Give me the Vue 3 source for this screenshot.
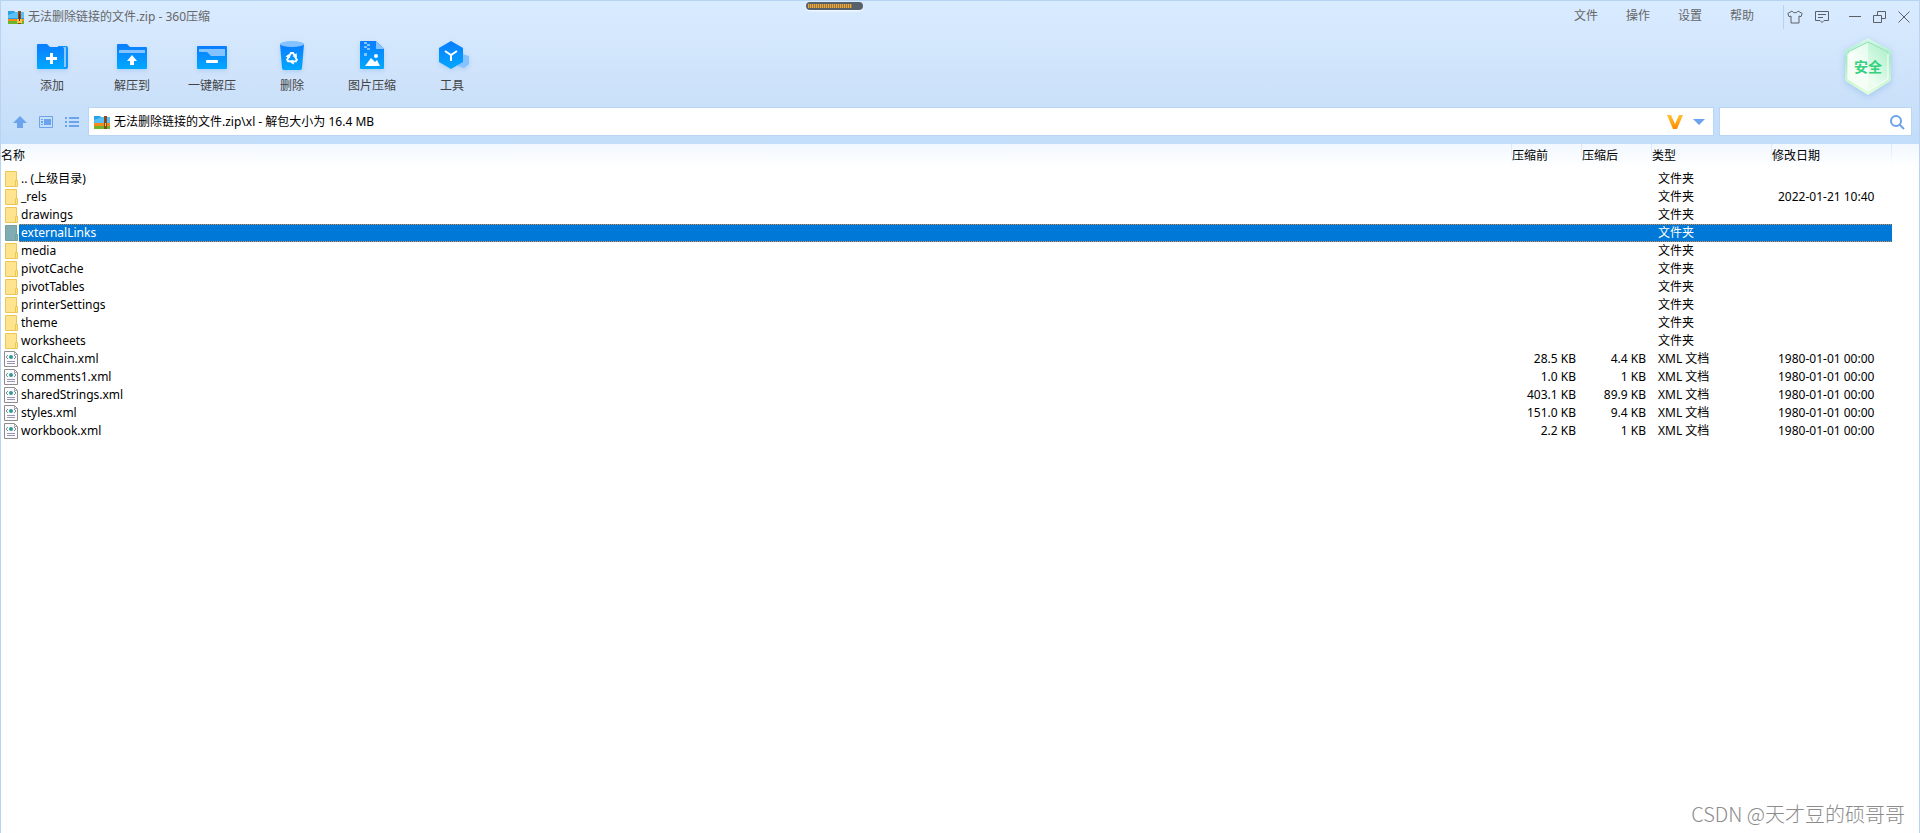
<template>
  <div class="window">
    <header class="header">
      <div class="title-bar">
        <svg class="archive-icon" viewBox="0 0 16 14" aria-hidden="true">
          <path d="M0 1h6l1 1h9v7H0z" fill="#2d9fe6" />
          <path d="M0 5l8-3h8v6H0z" fill="#5bc0f5" />
          <path d="M0 9h16v2H0z" fill="#f58a1f" />
          <path d="M0 11h16v3H0z" fill="#6fb52c" />
          <path d="M10 1h3v13h-3z" fill="#8a4a1c" />
          <path d="M9 9h5v4H9z" fill="#f9c846" />
          <path d="M11 4h1v7h-1z" fill="#5e2c0d" />
        </svg>
        <h1 class="title">无法删除链接的文件.zip - 360压缩</h1>
        <nav class="menus">
          <button v-for="menu in menus" :key="menu" type="button">{{ menu }}</button>
        </nav>
        <div class="window-buttons">
          <button type="button" aria-label="皮肤">
            <svg width="16" height="14" viewBox="0 0 16 14">
              <path d="M5 1L.8 3.500 2 6.700l2-.7v7h8V6l2 .7 1.200-3.200L11 1C10 3.300 6 3.300 5 1z" />
            </svg>
          </button>
          <button type="button" aria-label="反馈">
            <svg width="14" height="12" viewBox="0 0 14 12">
              <path d="M.5.5h13v9H9l-2 2-2-2H.500zM3 3.500h8M3 6.500h5" />
            </svg>
          </button>
          <button type="button" aria-label="最小化" class="minimize">
            <svg width="12" height="12" viewBox="0 0 12 12"><path d="M0 5.500h12" /></svg>
          </button>
          <button type="button" aria-label="还原">
            <svg width="13" height="12" viewBox="0 0 13 12">
              <path d="M.5 4.500h8v7h-8zM4.500 4V.5h8v7H9" />
            </svg>
          </button>
          <button type="button" aria-label="关闭">
            <svg width="12" height="12" viewBox="0 0 12 12"><path d="M.5.5l11 11M11.500.5l-11 11" /></svg>
          </button>
        </div>
      </div>

      <div class="toolbar">
        <button v-for="tool in tools" :key="tool.id" type="button" class="tool">
          <svg width="32" height="32" viewBox="0 0 32 32" aria-hidden="true">
            <defs>
              <linearGradient :id="'fill-' + tool.id" x1="0" y1="0" x2="0" y2="1">
                <stop offset="0" stop-color="#0a7cff" />
                <stop offset="1" stop-color="#00a8ff" />
              </linearGradient>
            </defs>
            <g v-if="tool.id === 'add'">
              <path d="M22 5h8q2 0 2 2v19q0 2-2 2h-8z" fill="#0a94ff" />
              <path d="M27 6h3v20h-3z" fill="#8cc8ff" />
              <path d="M1 4q0-1 1-1h9l3 3h12q2 0 2 2v19q0 1-1 1H2q-1 0-1-1z" :fill="`url(#fill-${tool.id})`" />
              <path d="M15.500 12v11M10 17.500h11" stroke="#fff" stroke-width="3" />
            </g>
            <g v-else-if="tool.id === 'extract'">
              <path d="M1 4q0-1 1-1h9l3 3h16q1 0 1 1v20q0 1-1 1H2q-1 0-1-1z" :fill="`url(#fill-${tool.id})`" />
              <path d="M3 9h26v3H3z" fill="#84c3ff" />
              <path d="M16 14l5 6h-3v4h-4v-4h-3z" fill="#fff" />
            </g>
            <g v-else-if="tool.id === 'quick'">
              <rect x="1" y="5" width="30" height="23" rx="1" :fill="`url(#fill-${tool.id})`" />
              <path d="M3 8h26v7H15l-4-4H3z" fill="#84c3ff" />
              <rect x="10" y="19" width="12" height="3" rx="1" fill="#fff" />
            </g>
            <g v-else-if="tool.id === 'delete'">
              <path d="M4 3h24l-2 24q0 2-2 2H8q-2 0-2-2z" :fill="`url(#fill-${tool.id})`" />
              <ellipse cx="16" cy="3" rx="12" ry="3" fill="#84c3ff" />
              <g v-for="turn in [0, 120, 240]" :key="turn" :transform="`rotate(${turn} 16 17)`">
                <path d="M13 15.500l2-3.500h2l1.500 2.500" fill="none" stroke="#fff" stroke-width="2" />
                <path d="M16.500 15.500l4.500.5-.5-4z" fill="#fff" />
              </g>
            </g>
            <g v-else-if="tool.id === 'image'">
              <path d="M5 0h15l8 8v19q0 1-1 1H5q-1 0-1-1V1q0-1 1-1z" :fill="`url(#fill-${tool.id})`" />
              <path d="M20 0l8 8h-8z" fill="#84c3ff" />
              <path d="M8 1h3v2H8zM11 3h3v2h-3zM8 5h3v2H8zM11 7h3v2h-3zM8 12h3v3H8z" fill="#84c3ff" />
              <path d="M9 25l6-8 4 4 2-2 3 6z" fill="#fff" />
              <circle cx="20" cy="15" r="2" fill="#fff" />
            </g>
            <g v-else>
              <path d="M26 13l7 2v8l-5 4-6-2z" fill="#84c3ff" />
              <path d="M15 0l12 7v14l-12 7-12-7V7z" :fill="`url(#fill-${tool.id})`" />
              <path d="M9 10l6 4 6-4M15 14v6" fill="none" stroke="#fff" stroke-width="2" />
            </g>
          </svg>
          <span>{{ tool.label }}</span>
        </button>
        <button type="button" class="safe-badge">
          <svg width="48" height="60" viewBox="0 0 48 60" aria-hidden="true">
            <defs>
              <linearGradient id="badge-rim" x1="0" y1="0" x2="0" y2="1">
                <stop offset="0" stop-color="#d9f7ef" />
                <stop offset="0.350" stop-color="#a3ebc4" />
                <stop offset="1" stop-color="#e4ffdd" />
              </linearGradient>
              <linearGradient id="badge-face" x1="1" y1="0" x2="0" y2="1">
                <stop offset="0" stop-color="#a6efc5" />
                <stop offset="0.600" stop-color="#edfdf1" />
                <stop offset="1" stop-color="#e6fbdf" />
              </linearGradient>
            </defs>
            <path d="M24 1l21 11q2 1 2 3v27q0 2-2 3L24 58 3 45q-2-1-2-3V15q0-2 2-3z" fill="url(#badge-rim)" />
            <path d="M24 5l20 10v27L24 54 4 42V15z" fill="url(#badge-face)" stroke="#fff" />
            <path d="M24 5L4 15v27l20 12z" fill="#fff" fill-opacity="0.500" />
            <path d="M4 17v-2L24 5l20 10v2" fill="none" stroke="#7fe0ae" />
          </svg>
          <span>安全</span>
        </button>
      </div>

      <div class="address-row">
        <div class="view-buttons">
          <button type="button" aria-label="上一级">
            <svg width="14" height="14" viewBox="0 0 14 14"><path d="M7 1l7 7h-4v5H4V8H0z" fill="#6ba3ec" /></svg>
          </button>
          <button type="button" aria-label="预览视图">
            <svg width="14" height="14" viewBox="0 0 14 14">
              <path d="M.5 1.500h13v11H.500z" fill="none" stroke="#6ba3ec" />
              <path d="M5 4h7v6H5zM2 4h2v1H2zM2 6h2v2H2zM2 9h2v1H2z" fill="#6ba3ec" />
            </svg>
          </button>
          <button type="button" aria-label="列表视图">
            <svg width="14" height="14" viewBox="0 0 14 14">
              <path d="M0 2h2v2H0zM0 6h2v2H0zM0 10h2v2H0zM4 2h10v2H4zM4 6h10v2H4zM4 10h10v2H4z" fill="#6ba3ec" />
            </svg>
          </button>
        </div>
        <div class="address-box">
          <svg class="archive-icon" viewBox="0 0 16 14" aria-hidden="true">
            <path d="M0 1h6l1 1h9v7H0z" fill="#2d9fe6" />
            <path d="M0 5l8-3h8v6H0z" fill="#5bc0f5" />
            <path d="M0 8h16v3H0z" fill="#f58a1f" />
            <path d="M0 11h16v3H0z" fill="#6fb52c" />
            <path d="M10 1h3v13h-3z" fill="#8a4a1c" />
            <path d="M11 8h1v3h-1z" fill="#f9c846" />
          </svg>
          <input v-model="address" type="text" aria-label="路径" />
          <button type="button" aria-label="会员" class="vip">
            <svg width="16" height="14" viewBox="0 0 16 14">
              <defs>
                <linearGradient id="vip-fill" x1="0" y1="0" x2="0" y2="1">
                  <stop offset="0" stop-color="#ffc233" />
                  <stop offset="1" stop-color="#ff8a00" />
                </linearGradient>
              </defs>
              <path d="M0 0h4l4 9 4-9h4l-6 14H6z" fill="url(#vip-fill)" />
            </svg>
          </button>
          <button type="button" aria-label="历史路径">
            <svg width="12" height="6" viewBox="0 0 12 6"><path d="M0 0h12L6 6z" fill="#6ba3ec" /></svg>
          </button>
        </div>
        <div class="search-box">
          <input v-model="keyword" type="text" aria-label="搜索" />
          <button type="button" aria-label="开始搜索">
            <svg width="16" height="16" viewBox="0 0 16 16" fill="none" stroke="#6ba3ec" stroke-width="2">
              <circle cx="7" cy="7" r="5" />
              <path d="M10.500 10.500L15 15" />
            </svg>
          </button>
        </div>
      </div>

      <!-- Floating progress pill over the title bar -->
      <div class="progress-pill"><span></span></div>
    </header>

    <main class="content">
      <table class="files">
        <colgroup>
          <col />
          <col class="col-size" />
          <col class="col-size" />
          <col class="col-type" />
          <col class="col-date" />
        </colgroup>
        <thead>
          <tr>
            <th v-for="column in columns" :key="column">{{ column }}</th>
          </tr>
        </thead>
        <tbody>
          <tr
            v-for="file in files"
            :key="file.name"
            :class="{ selected: file.name === selectedName }"
            @click="selectedName = file.name"
          >
            <td>
              <div class="name-cell">
                <svg v-if="file.folder" class="file-icon" width="14" height="16" viewBox="0 0 14 16" aria-hidden="true">
                  <path class="folder-shape" d="M1.500.5h11v15h-11z" />
                  <path class="folder-shape" d="M11.500 9.500h2v6h-2z" />
                </svg>
                <svg v-else class="file-icon" width="14" height="16" viewBox="0 0 14 16" aria-hidden="true">
                  <path d="M.5.5h10l3 3v12H.500z" fill="#fbfbfd" stroke="#8d8d8d" />
                  <path d="M10.500.5v3h3" fill="none" stroke="#a5a5a5" />
                  <circle cx="7" cy="6" r="2" fill="#2f9c94" />
                  <path d="M4 4L2 6l2 2M10 4l2 2-2 2" fill="none" stroke="#7d8ea3" />
                  <path d="M3 10.500h8M3 12.500h8" stroke="#9a96b4" />
                </svg>
                <span class="file-name">{{ file.name }}</span>
              </div>
            </td>
            <td class="number">{{ file.size }}</td>
            <td class="number">{{ file.packed }}</td>
            <td class="text">{{ file.folder ? '文件夹' : 'XML 文档' }}</td>
            <td class="text">{{ file.date }}</td>
          </tr>
        </tbody>
      </table>
    </main>

    <div class="watermark">CSDN @天才豆的硕哥哥</div>
  </div>
</template>

<script setup>
import { ref } from 'vue';

const menus = ['文件', '操作', '设置', '帮助'];

const tools = [
  { id: 'add', label: '添加' },
  { id: 'extract', label: '解压到' },
  { id: 'quick', label: '一键解压' },
  { id: 'delete', label: '删除' },
  { id: 'image', label: '图片压缩' },
  { id: 'tools', label: '工具' }
];

const columns = ['名称', '压缩前', '压缩后', '类型', '修改日期'];

const files = [
  { name: '.. (上级目录)', folder: true },
  { name: '_rels', folder: true, date: '2022-01-21 10:40' },
  { name: 'drawings', folder: true },
  { name: 'externalLinks', folder: true },
  { name: 'media', folder: true },
  { name: 'pivotCache', folder: true },
  { name: 'pivotTables', folder: true },
  { name: 'printerSettings', folder: true },
  { name: 'theme', folder: true },
  { name: 'worksheets', folder: true },
  { name: 'calcChain.xml', size: '28.5 KB', packed: '4.4 KB', date: '1980-01-01 00:00' },
  { name: 'comments1.xml', size: '1.0 KB', packed: '1 KB', date: '1980-01-01 00:00' },
  { name: 'sharedStrings.xml', size: '403.1 KB', packed: '89.9 KB', date: '1980-01-01 00:00' },
  { name: 'styles.xml', size: '151.0 KB', packed: '9.4 KB', date: '1980-01-01 00:00' },
  { name: 'workbook.xml', size: '2.2 KB', packed: '1 KB', date: '1980-01-01 00:00' }
];

const address = ref('无法删除链接的文件.zip\\xl - 解包大小为 16.4 MB');
const keyword = ref('');
const selectedName = ref('externalLinks');
</script>

<style>
body {
  background: #fff;
}
</style>

<style scoped>
.window {
  position: relative;
  box-sizing: border-box;
  min-height: 100vh;
  border-left: 1px solid #b8d4f2;
  border-right: 1px solid #b8d4f2;
  font-family: "Noto Sans", "Noto Sans CJK SC", sans-serif;
  font-size: 12px;
  line-height: 18px;
  color: #000;
}

button {
  padding: 0;
  border: 0;
  background: none;
  font: inherit;
  color: inherit;
  cursor: pointer;
}

svg {
  display: block;
  flex: none;
}

input {
  flex: 1;
  min-width: 0;
  padding: 0;
  border: 0;
  outline: 0;
  background: none;
  font: inherit;
  color: inherit;
}

.header {
  position: relative;
  padding-bottom: 8px;
  border-top: 1px solid #b5d3f2;
  background: linear-gradient(#d9ebff, #cde2fa 60%, #c2ddf9);
}

/* Title bar */
.title-bar {
  display: flex;
  align-items: center;
  height: 32px;
  padding: 0 9px 0 7px;
  color: #666;
}

.archive-icon {
  width: 16px;
  height: 14px;
}

.title {
  flex: 1;
  margin: 0 0 0 4px;
  font-size: 12px;
  font-weight: 400;
}

.menus {
  display: flex;
  gap: 28px;
  padding: 0 29px 2px 0;
}

.window-buttons {
  display: flex;
  align-items: center;
  gap: 12px;
  height: 24px;
  padding-left: 3px;
  border-left: 1px solid #b5d3f2;
}

.window-buttons svg {
  fill: none;
  stroke: #5c6068;
}

.minimize {
  margin-left: 8px;
}

/* Toolbar */
.toolbar {
  display: flex;
  height: 74px;
  padding: 0 27px 0 11px;
}

.tool {
  display: flex;
  flex-direction: column;
  align-items: center;
  justify-content: flex-start;
  gap: 4px;
  width: 80px;
  padding-top: 8px;
  color: #444;
}

.tool svg {
  overflow: visible;
  filter: drop-shadow(0 2px 2px rgba(60, 130, 220, 0.2));
}

.safe-badge {
  display: grid;
  place-items: center;
  align-self: flex-start;
  margin: 4px 0 0 auto;
  font-size: 14px;
  font-weight: 700;
  color: #34d07d;
}

.safe-badge > * {
  grid-area: 1 / 1;
}

.safe-badge svg {
  filter: drop-shadow(0 2px 3px rgba(80, 140, 220, 0.3));
}

.safe-badge span {
  z-index: 1;
}

/* Address row */
.address-row {
  display: flex;
  gap: 5px;
  padding-right: 7px;
}

.view-buttons {
  display: flex;
  align-items: center;
  gap: 12px;
  padding: 0 4px 0 12px;
}

.address-box,
.search-box {
  display: flex;
  align-items: center;
  box-sizing: border-box;
  height: 29px;
  border: 1px solid #b9d6f5;
  background: #fff;
}

.address-box {
  flex: 1;
  gap: 4px;
  padding: 0 8px 0 5px;
}

.vip {
  margin-right: 6px;
}

.search-box {
  width: 193px;
  padding: 0 6px 0 8px;
}

.progress-pill {
  position: absolute;
  top: 1px;
  left: calc(42% - 1px);
  box-sizing: border-box;
  width: 57px;
  height: 8px;
  padding: 2px;
  border-radius: 4px;
  background: #56616c;
  box-shadow: 0 1px 2px rgba(255, 255, 255, 0.9);
}

.progress-pill span {
  display: block;
  width: 44px;
  height: 4px;
  background: repeating-linear-gradient(90deg, #f7a62b 0 1px, #8d7a4f 1px 2px);
}

/* File list */
.content {
  background: linear-gradient(#f2f8ff, #fff 24px);
}

.files {
  width: calc(100% - 27px);
  border-collapse: collapse;
  table-layout: fixed;
}

.col-size {
  width: 70px;
}

.col-type,
.col-date {
  width: 120px;
}

.files th {
  height: 26px;
  padding: 0;
  font-weight: 400;
  text-align: left;
  vertical-align: top;
  line-height: 23px;
  background: linear-gradient(#d5e8fd, #fff) right top / 1px 22px no-repeat;
}

.files td {
  height: 18px;
  padding: 0;
  white-space: nowrap;
}

.name-cell {
  display: flex;
  align-items: center;
  height: 18px;
  padding-left: 3px;
}

.file-icon {
  margin-right: 1px;
}

.file-name {
  flex: 1;
  padding-left: 2px;
  line-height: 18px;
}

.folder-shape {
  fill: #ffe48f;
  stroke: #ecc850;
}

.files .number {
  padding-right: 6px;
  text-align: right;
}

.files .text {
  padding-left: 6px;
}

/* Dotted focus line above and below the selected row */
.selected td:not(:first-child),
.selected .file-name {
  background:
    repeating-linear-gradient(90deg, #e08a3c 0 1px, #0078d7 1px 2px) top / 100% 1px no-repeat,
    repeating-linear-gradient(90deg, #e08a3c 0 1px, #0078d7 1px 2px) bottom / 100% 1px no-repeat,
    #0078d7;
  color: #fff;
}

.selected .folder-shape {
  fill: #80adb4;
  stroke: #76a197;
}

.watermark {
  position: absolute;
  right: 14px;
  bottom: 6px;
  font-family: "Noto Sans CJK SC", sans-serif;
  font-size: 20px;
  font-weight: 300;
  line-height: 26px;
  color: #8c8c8c;
}
</style>
